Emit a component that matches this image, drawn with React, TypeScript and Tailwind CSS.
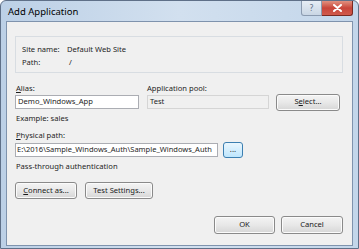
import React from "react";

const font = { fontFamily: '"Noto Sans", "Open Sans", Arial, sans-serif' };

function Btn({ children, className = "" }: { children: React.ReactNode; className?: string }) {
  return (
    <div
      className={`flex items-center justify-center rounded-[3px] border border-[#8a8a8a] bg-gradient-to-b from-[#f4f4f4] via-[#e8e8e8] to-[#d6d6d6] text-[7.6px] text-[#1a1a1a] shadow-[inset_0_0_0_1px_#fbfbfb] ${className}`}
    >
      {children}
    </div>
  );
}

export default function App() {
  return (
    <div
      className="relative flex h-[249px] w-[359px] flex-col overflow-hidden rounded-t-[6px] border border-[#5f7088] bg-gradient-to-r from-[#bcd0e6] via-[#d2e0ef] to-[#c3d6ea] text-[#1e1e1e]"
      style={font}
    >
      {/* title bar */}
      <div className="flex h-[20px] shrink-0 items-start pl-[7px] pr-[5px]">
        <span className="mt-[5px] text-[9.5px] leading-[12px] text-black">Add Application</span>
        <div className="ml-auto flex">
          <div className="flex h-[15px] w-[21px] items-center justify-center rounded-bl-[3px] border border-t-0 border-[#8b9bb0] bg-gradient-to-b from-[#e6edf5] to-[#c9d6e4] text-[8px] leading-none text-[#5a6a80]">
            ?
          </div>
          <div className="flex h-[15px] w-[31px] items-center justify-center rounded-br-[3px] border border-l-0 border-t-0 border-[#7a2a22] bg-gradient-to-b from-[#e09080] via-[#c8453a] to-[#d05a4c]">
            <svg width="9" height="8" viewBox="0 0 9 8">
              <path d="M1 1 L8 7 M8 1 L1 7" stroke="#fff" strokeWidth="2" strokeLinecap="round" />
            </svg>
          </div>
        </div>
      </div>

      {/* client area */}
      <div className="mx-[5px] mb-[2px] flex flex-1 flex-col border border-[#7f93ad] bg-[#f0f0f0] pl-[8px] pr-[9px]">
        <div className="mt-[14px] h-[37px] border border-[#d8dde2] pl-[6px] pt-[6px] text-[7.6px] leading-[13px]">
          <div className="flex">
            <span className="w-[45px]">Site name:</span>
            <span>Default Web Site</span>
          </div>
          <div className="flex">
            <span className="w-[47px]">Path:</span>
            <span>/</span>
          </div>
        </div>

        <div className="mt-[9px] flex text-[7.6px] leading-[12px]">
          <span className="w-[132px] pl-[1px]">
            <u>A</u>lias:
          </span>
          <span>Application pool:</span>
        </div>

        <div className="mt-[-1px] flex h-[18px] items-center">
          <div className="flex h-[14px] w-[124px] items-center border border-[#abadb3] bg-white pl-[2px] text-[7.6px]">
            Demo_Windows_App
          </div>
          <div className="ml-[8px] flex h-[14px] w-[122px] items-center border border-[#d5d5d5] bg-[#f0f0f0] pl-[2px] text-[7.6px]">
            Test
          </div>
          <Btn className="ml-[7px] h-[17px] w-[64px]">
            <span>
              S<u>e</u>lect...
            </span>
          </Btn>
        </div>

        <div className="mt-[1px] pl-[1px] text-[7.6px] leading-[12px]">Example: sales</div>

        <div className="mt-[5px] pl-[1px] text-[7.6px] leading-[12px]">
          <u>P</u>hysical path:
        </div>

        <div className="mt-[1px] flex h-[16px] items-center">
          <div className="flex h-[14px] w-[203px] items-center overflow-hidden whitespace-nowrap border border-[#abadb3] bg-white pl-[1px] text-[7.5px]">
            E:\2016\Sample_Windows_Auth\Sample_Windows_Auth
          </div>
          <div className="ml-[5px] flex h-[16px] w-[20px] items-center justify-center rounded-[3px] border border-[#3c7fb1] bg-gradient-to-b from-[#eaf6fd] to-[#bee6fd] pb-[3px] text-[8px] leading-none">
            ...
          </div>
        </div>

        <div className="mt-[2px] pl-[1px] text-[7.6px] leading-[12px]">Pass-through authentication</div>

        <div className="mt-[10px] flex">
          <Btn className="h-[17px] w-[62px]">
            <span>
              <u>C</u>onnect as...
            </span>
          </Btn>
          <Btn className="ml-[8px] h-[17px] w-[68px]">
            <span>
              Test Settin<u>g</u>s...
            </span>
          </Btn>
        </div>

        <div className="mt-auto mb-[11px] flex justify-end">
          <Btn className="h-[18px] w-[61px]">OK</Btn>
          <Btn className="ml-[6px] h-[18px] w-[62px]">Cancel</Btn>
        </div>
      </div>
    </div>
  );
}
